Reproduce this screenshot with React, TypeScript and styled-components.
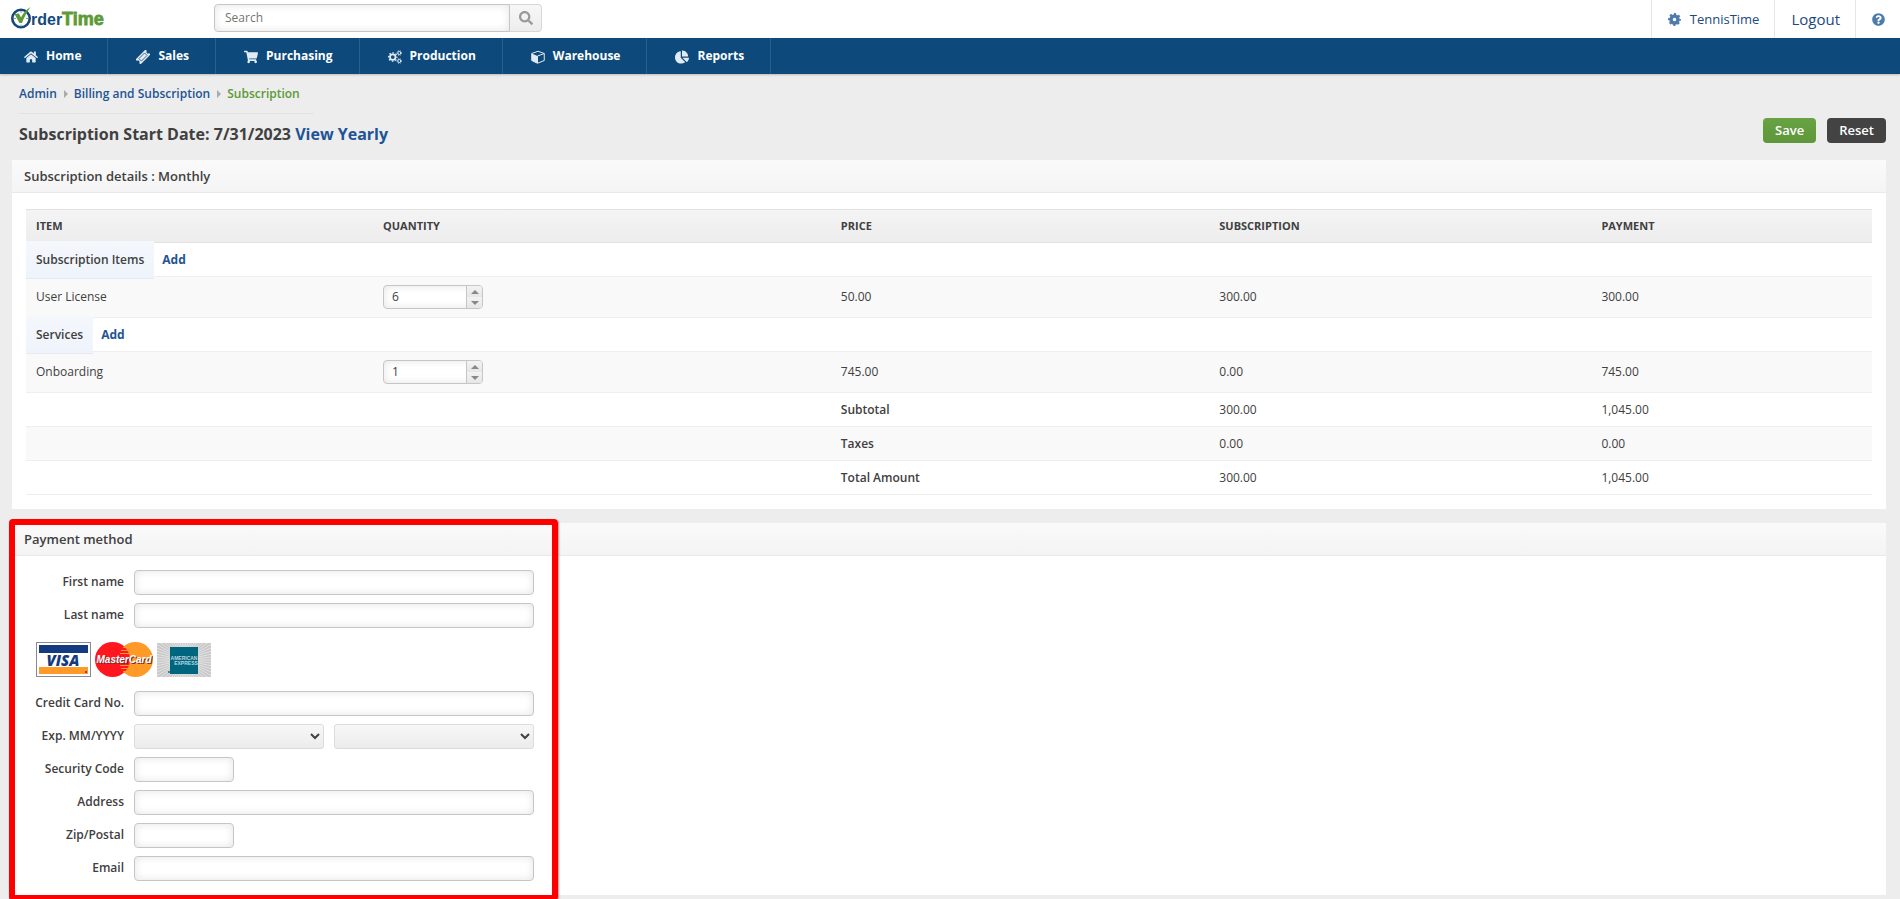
import React, { useState } from 'react';
import styled, { createGlobalStyle, css } from 'styled-components';
import { FaQuestionCircle, FaSearch, FaShoppingCart, FaHome, FaChartPie } from 'react-icons/fa';

const GlobalStyle = createGlobalStyle`
  * { box-sizing: border-box; }
  body {
    margin: 0;
    background: #ededed;
    color: #404040;
    font: 12px/20px 'Open Sans', 'Liberation Sans', sans-serif;
  }
  input, select, button { font: inherit; color: inherit; margin: 0; }
  a { color: #1e5494; text-decoration: none; }
`;

const TopBar = styled.header`
  display: flex;
  height: 38px;
  background: #fff;
`;

const LogoLink = styled.a`
  flex: 0 0 214px;
  padding: 6px 0 0 10px;
  svg { display: block; }
`;

const SearchForm = styled.form`
  display: flex;
  width: 328px;
  height: 28px;
  margin-top: 4px;
`;

const sunken = css`
  border: 1px solid #c6c6c6;
  background: #fff;
  box-shadow: inset 0 0 8px #e4e4e4;
`;

const SearchInput = styled.input`
  ${sunken}
  flex: 1;
  min-width: 0;
  padding: 0 10px;
  border-radius: 4px 0 0 4px;
  &::placeholder { color: #757575; }
`;

const SearchButton = styled.button`
  display: flex;
  align-items: center;
  justify-content: center;
  width: 32px;
  padding: 0;
  border: 1px solid #d8d8d8;
  border-left: 0;
  border-radius: 0 4px 4px 0;
  background: linear-gradient(#f7f7f7, #ededed);
  color: #999;
  font-size: 14px;
`;

const AccountLinks = styled.nav`
  display: flex;
  margin-left: auto;
`;

const AccountLink = styled.a<{ $large?: boolean }>`
  display: flex;
  align-items: center;
  gap: 9px;
  height: 38px;
  padding: 0 15px 0 16px;
  border-left: 1px solid #e6e6e6;
  color: #1c4a7c;
  font-size: ${p => (p.$large ? 15 : 13)}px;
  svg { color: #4d7bae; font-size: 13px; }
`;

const MainNav = styled.nav`
  display: flex;
  height: 36px;
  background: #0d4a7b;
  box-shadow: 0 1px 2px #bbb;
`;

const NavLink = styled.a<{ $first?: boolean }>`
  display: flex;
  align-items: center;
  gap: 8px;
  padding: 0 26px 0 ${p => (p.$first ? 24 : 28)}px;
  border-right: 1px solid #2a5f8c;
  color: #fff;
  font-weight: 700;
  svg { width: 14px; height: 14px; margin-top: 2px; color: #e2ebf5; }
`;

const PageHead = styled.div`
  display: flex;
  justify-content: space-between;
  align-items: flex-end;
  height: 86px;
  padding: 0 14px 0 19px;
`;

const Crumbs = styled.div`
  display: flex;
  align-items: center;
  width: 295px;
  height: 40px;
  border-bottom: 1px solid #e2e2e2;
  font-weight: 600;
`;

const CrumbArrow = styled.span`
  margin: 0 6px 0 7px;
  border: 4px solid transparent;
  border-left-color: #aaa;
  border-right: 0;
`;

const CurrentCrumb = styled.span`
  color: #5b9a35;
`;

const Title = styled.h1`
  margin: 0;
  padding: 10px 0 16px;
  font-size: 16px;
  line-height: 20px;
  font-weight: 700;
`;

const Actions = styled.div`
  display: flex;
  gap: 11px;
  padding-bottom: 17px;
`;

const ActionButton = styled.button<{ $primary?: boolean }>`
  height: 25px;
  padding: 0 12px;
  border: 0;
  border-radius: 4px;
  background: ${p => (p.$primary ? 'linear-gradient(#67a343, #5f963b)' : '#434343')};
  color: #fff;
  font-size: 13px;
  font-weight: 600;
  line-height: 25px;
`;

const Panel = styled.section`
  margin: 0 14px 14px 12px;
  background: #fff;
`;

const PanelTitle = styled.h2`
  height: 33px;
  margin: 0;
  padding: 0 12px;
  border-bottom: 1px solid #e9e9e9;
  background: linear-gradient(#fafafa, #f4f4f4);
  font-size: 13px;
  font-weight: 600;
  line-height: 33px;
`;

const TableWrap = styled.div`
  padding: 16px 14px 14px;
`;

const Table = styled.table`
  width: 100%;
  table-layout: fixed;
  border-collapse: separate;
  border-spacing: 0;
`;

const HeadCell = styled.th`
  height: 34px;
  padding: 0 10px;
  border: solid #e2e2e2;
  border-width: 1px 0;
  background: linear-gradient(#f4f4f4, #ededed);
  font-size: 11px;
  font-weight: 700;
  text-align: left;
  text-transform: uppercase;
`;

const Row = styled.tr<{ $shaded?: boolean }>`
  background: ${p => (p.$shaded ? '#f9f9f9' : '#fff')};
`;

const Cell = styled.td<{ $tall?: boolean; $strong?: boolean }>`
  height: ${p => (p.$tall ? 41 : 34)}px;
  padding: 0 10px;
  border-bottom: 1px solid #eee;
  font-weight: ${p => (p.$strong ? 600 : 400)};
`;

const GroupCell = styled.td`
  height: 34px;
  padding: 0;
  border-bottom: 1px solid #eee;
`;

const GroupLine = styled.div`
  display: flex;
  align-items: center;
  gap: 8px;
  height: 33px;
`;

const GroupTag = styled.span`
  position: relative;
  height: 38px;
  padding: 0 10px;
  border-bottom: 1px solid #e6e9ee;
  background: linear-gradient(#f4f8fd, #eff3fb);
  font-weight: 600;
  line-height: 38px;
`;

const AddLink = styled.a`
  font-weight: 700;
`;

const Spinner = styled.div`
  ${sunken}
  display: flex;
  width: 100px;
  height: 24px;
  border-radius: 4px;
  overflow: hidden;
`;

const SpinnerInput = styled.input`
  flex: 1;
  min-width: 0;
  padding: 0 8px;
  border: 0;
  background: transparent;
`;

const SpinnerButtons = styled.div`
  display: flex;
  flex-direction: column;
  width: 16px;
  border-left: 1px solid #c6c6c6;
`;

const SpinnerButton = styled.button<{ $down?: boolean }>`
  display: flex;
  flex: 1;
  align-items: center;
  justify-content: center;
  padding: 0;
  border: 0;
  background: linear-gradient(#f3f3f3, #e6e6e6);
  &::after {
    content: '';
    border: 4px solid transparent;
    ${p => (p.$down ? 'border-top-color: #888; border-bottom: 0;' : 'border-bottom-color: #888; border-top: 0;')}
  }
`;

const PaymentBody = styled.div`
  display: flex;
  flex-direction: column;
  gap: 8px;
  padding: 14px 0;
`;

const FieldRow = styled.div`
  display: grid;
  grid-template-columns: 112px 400px;
  column-gap: 10px;
  height: 25px;
`;

const Label = styled.label`
  line-height: 24px;
  font-weight: 600;
  text-align: right;
  white-space: nowrap;
`;

const Field = styled.input<{ $short?: boolean }>`
  ${sunken}
  width: ${p => (p.$short ? 100 : 400)}px;
  padding: 0 8px;
  border-radius: 4px;
`;

const ExpiryFields = styled.div`
  display: grid;
  grid-template-columns: 19fr 20fr;
  column-gap: 10px;
`;

const Select = styled.select`
  height: 25px;
  padding-right: 1px;
  border: 1px solid #dcdcdc;
  border-radius: 3px;
  background: linear-gradient(#f7f7f7, #ececec);
`;

const Cards = styled.div`
  display: flex;
  align-items: center;
  gap: 4px;
  height: 47px;
  padding: 0 24px;
`;

const PaymentArea = styled.div`
  position: relative;
`;

const Highlight = styled.div`
  position: absolute;
  top: -4px;
  left: 9px;
  width: 549px;
  height: 382px;
  border: 6px solid #f00;
  border-radius: 4px;
  box-shadow: 1px 1px 2px #999;
  pointer-events: none;
`;

const Logo = () => (
  <svg width="100" height="24" viewBox="0 0 100 24" role="img" aria-label="OrderTime">
    <circle cx="11" cy="12.500" r="8.700" fill="#fff" stroke="#15497d" strokeWidth="2.600" />
    <path d="M11 5v2M4 12.500h2M16 12.500h2M11 18.500v2" stroke="#8aa5c0" />
    <path d="M4.500 8l4.500-.5 2 4C13 7.500 16 3.500 20.500 1 17 6 14 11 12 17H9.500Z" fill="#5d9b37" />
    <text x="21" y="19" fontFamily="Liberation Sans" fontWeight="700" fontSize="16" fill="#15497d">rder</text>
    <text x="52" y="19" fontFamily="Liberation Sans" fontWeight="700" fontSize="18" fill="#5d9b37" stroke="#5d9b37" strokeWidth="0.800">Time</text>
  </svg>
);

const CogIcon = () => (
  <svg width="13" height="13" viewBox="0 0 26 26" aria-hidden="true">
    <circle cx="13" cy="13" r="7" fill="none" stroke="currentColor" strokeWidth="7" />
    <circle cx="13" cy="13" r="11" fill="none" stroke="currentColor" strokeWidth="4" pathLength="16" strokeDasharray="1 1" strokeDashoffset="0.500" />
  </svg>
);

const CogsIcon = () => (
  <svg viewBox="0 0 28 28" fill="none" stroke="currentColor" aria-hidden="true">
    <circle cx="9.500" cy="14" r="5.500" strokeWidth="3.500" />
    <circle cx="9.500" cy="14" r="8.300" strokeWidth="2.600" pathLength="16" strokeDasharray="1 1" strokeDashoffset="0.500" />
    <circle cx="22.500" cy="6" r="3" strokeWidth="2" />
    <circle cx="22.500" cy="6" r="4.700" strokeWidth="1.600" pathLength="16" strokeDasharray="1 1" />
    <circle cx="22.500" cy="22" r="3" strokeWidth="2" />
    <circle cx="22.500" cy="22" r="4.700" strokeWidth="1.600" pathLength="16" strokeDasharray="1 1" />
  </svg>
);

const TicketIcon = () => (
  <svg viewBox="0 0 28 28" aria-hidden="true">
    <g transform="rotate(-45 14 14)">
      <path d="M0 7h28v4a3 3 0 0 0 0 6v4H0v-4a3 3 0 0 0 0-6Z" fill="currentColor" />
      <path d="M6 10.500h16v7H6Z" fill="none" stroke="#0d4a7b" strokeWidth="1.500" />
    </g>
  </svg>
);

const CubeIcon = () => (
  <svg viewBox="0 0 28 28" aria-hidden="true">
    <path d="M1.500 7L14 2.500 26.500 7v14L13 26.500 1.500 21Z" fill="none" stroke="currentColor" strokeWidth="2" strokeLinejoin="round" />
    <path d="M1.500 7L13 12v14.500L1.500 21Z" fill="currentColor" />
    <path d="M13 12L26.500 7M13 12v14" stroke="currentColor" strokeWidth="2" />
  </svg>
);

const Visa = () => (
  <svg width="55" height="35" viewBox="0 0 55 35" role="img" aria-label="Visa">
    <rect x="0.500" y="0.500" width="54" height="34" fill="#fff" stroke="#8a8a94" />
    <rect x="3" y="3" width="49" height="8" fill="#143a80" />
    <rect x="3" y="25" width="49" height="7" fill="#ff9a27" />
    <text x="27" y="24" textAnchor="middle" fontFamily="Open Sans" fontStyle="italic" fontWeight="800" fontSize="15" fill="#143a80">VISA</text>
    <rect x="49" y="29" width="2" height="2" fill="#a33a50" />
  </svg>
);

const MasterCard = () => (
  <svg width="58" height="35" viewBox="0 0 58 35" role="img" aria-label="MasterCard">
    <circle cx="40.500" cy="17.500" r="17.500" fill="#ff9a27" />
    <circle cx="17.500" cy="17.500" r="17.500" fill="#ff171d" />
    <path d="M28 5.500h5M26 8.500h7M25 11.500h9M25 23.500h9M26 26.500h7M28 29.500h5" stroke="#ff9a27" />
    <text x="30" y="22" textAnchor="middle" fontFamily="Liberation Sans" fontStyle="italic" fontWeight="700" fontSize="10" fill="#762c34">MasterCard</text>
    <text x="29" y="21" textAnchor="middle" fontFamily="Liberation Sans" fontStyle="italic" fontWeight="700" fontSize="10" fill="#fff">MasterCard</text>
  </svg>
);

const rays = Array.from({ length: 60 }, (_, i) => {
  const a = (i * Math.PI) / 30;
  return `M27 17L${(27 + 40 * Math.cos(a)).toFixed(1)} ${(17 + 40 * Math.sin(a)).toFixed(1)}`;
}).join('');

const Amex = () => (
  <svg width="54" height="34" viewBox="0 0 54 34" role="img" aria-label="American Express">
    <rect width="54" height="34" fill="#c8c8c8" />
    <path d={rays} stroke="#e2e2e2" />
    <rect x="13" y="4" width="28" height="27" fill="#00667f" />
    <text x="27" y="17" textAnchor="middle" fontFamily="Liberation Sans" fontWeight="700" fontSize="5" fill="#b9d6df">AMERICAN</text>
    <text x="29" y="22" textAnchor="middle" fontFamily="Liberation Sans" fontWeight="700" fontSize="5" fill="#b9d6df">EXPRESS</text>
    <rect x="11" y="28" width="2" height="2" fill="#3a8296" />
  </svg>
);

const navItems = [
  { label: 'Home', Icon: FaHome },
  { label: 'Sales', Icon: TicketIcon },
  { label: 'Purchasing', Icon: FaShoppingCart },
  { label: 'Production', Icon: CogsIcon },
  { label: 'Warehouse', Icon: CubeIcon },
  { label: 'Reports', Icon: FaChartPie },
];

const groups = [
  { name: 'Subscription Items', item: 'User License', qty: 6, price: '50.00', sub: '300.00', pay: '300.00' },
  { name: 'Services', item: 'Onboarding', qty: 1, price: '745.00', sub: '0.00', pay: '745.00' },
];

const totals = [
  ['Subtotal', '300.00', '1,045.00'],
  ['Taxes', '0.00', '0.00'],
  ['Total Amount', '300.00', '1,045.00'],
];

function Quantity({ label, initial }: { label: string; initial: number }) {
  const [value, setValue] = useState(initial);
  return (
    <Spinner>
      <SpinnerInput aria-label={`${label} quantity`} value={value} onChange={e => setValue(Number(e.target.value) || 0)} />
      <SpinnerButtons>
        <SpinnerButton type="button" aria-label="Increase" onClick={() => setValue(value + 1)} />
        <SpinnerButton type="button" $down aria-label="Decrease" onClick={() => setValue(Math.max(0, value - 1))} />
      </SpinnerButtons>
    </Spinner>
  );
}

function TextField({ id, label, short }: { id: string; label: string; short?: boolean }) {
  return (
    <FieldRow>
      <Label htmlFor={id}>{label}</Label>
      <Field id={id} type="text" $short={short} />
    </FieldRow>
  );
}

export default function App() {
  return (
    <>
      <GlobalStyle />
      <TopBar>
        <LogoLink href="#"><Logo /></LogoLink>
        <SearchForm onSubmit={e => e.preventDefault()}>
          <SearchInput type="text" placeholder="Search" aria-label="Search" />
          <SearchButton aria-label="Go"><FaSearch /></SearchButton>
        </SearchForm>
        <AccountLinks>
          <AccountLink href="#"><CogIcon />TennisTime</AccountLink>
          <AccountLink href="#" $large>Logout</AccountLink>
          <AccountLink href="#" aria-label="Help"><FaQuestionCircle /></AccountLink>
        </AccountLinks>
      </TopBar>
      <MainNav>
        {navItems.map(({ label, Icon }, i) => (
          <NavLink key={label} href="#" $first={i === 0}><Icon />{label}</NavLink>
        ))}
      </MainNav>
      <main>
        <PageHead>
          <div>
            <Crumbs>
              <a href="#">Admin</a>
              <CrumbArrow />
              <a href="#">Billing and Subscription</a>
              <CrumbArrow />
              <CurrentCrumb>Subscription</CurrentCrumb>
            </Crumbs>
            <Title>Subscription Start Date: 7/31/2023 <a href="#">View Yearly</a></Title>
          </div>
          <Actions>
            <ActionButton type="button" $primary>Save</ActionButton>
            <ActionButton type="button">Reset</ActionButton>
          </Actions>
        </PageHead>
        <Panel>
          <PanelTitle>Subscription details : Monthly</PanelTitle>
          <TableWrap>
            <Table>
              <colgroup>
                <col width="18.8%" />
                <col width="24.8%" />
                <col width="20.5%" />
                <col width="20.7%" />
                <col width="15.2%" />
              </colgroup>
              <thead>
                <tr>
                  {['Item', 'Quantity', 'Price', 'Subscription', 'Payment'].map(h => <HeadCell key={h}>{h}</HeadCell>)}
                </tr>
              </thead>
              <tbody>
                {groups.map(g => (
                  <React.Fragment key={g.name}>
                    <Row>
                      <GroupCell colSpan={5}>
                        <GroupLine>
                          <GroupTag>{g.name}</GroupTag>
                          <AddLink href="#">Add</AddLink>
                        </GroupLine>
                      </GroupCell>
                    </Row>
                    <Row $shaded>
                      <Cell $tall>{g.item}</Cell>
                      <Cell $tall><Quantity label={g.item} initial={g.qty} /></Cell>
                      <Cell $tall>{g.price}</Cell>
                      <Cell $tall>{g.sub}</Cell>
                      <Cell $tall>{g.pay}</Cell>
                    </Row>
                  </React.Fragment>
                ))}
                {totals.map(([name, sub, pay], i) => (
                  <Row key={name} $shaded={i === 1}>
                    <Cell colSpan={2} />
                    <Cell $strong>{name}</Cell>
                    <Cell>{sub}</Cell>
                    <Cell>{pay}</Cell>
                  </Row>
                ))}
              </tbody>
            </Table>
          </TableWrap>
        </Panel>
        <PaymentArea>
          <Panel>
            <PanelTitle>Payment method</PanelTitle>
            <PaymentBody>
              <TextField id="first" label="First name" />
              <TextField id="last" label="Last name" />
              <Cards><Visa /><MasterCard /><Amex /></Cards>
              <TextField id="card" label="Credit Card No." />
              <FieldRow>
                <Label htmlFor="month">Exp. MM/YYYY</Label>
                <ExpiryFields>
                  <Select id="month" />
                  <Select aria-label="Expiry year" />
                </ExpiryFields>
              </FieldRow>
              <TextField id="code" label="Security Code" short />
              <TextField id="address" label="Address" />
              <TextField id="zip" label="Zip/Postal" short />
              <TextField id="email" label="Email" />
            </PaymentBody>
          </Panel>
          <Highlight />
        </PaymentArea>
      </main>
    </>
  );
}
